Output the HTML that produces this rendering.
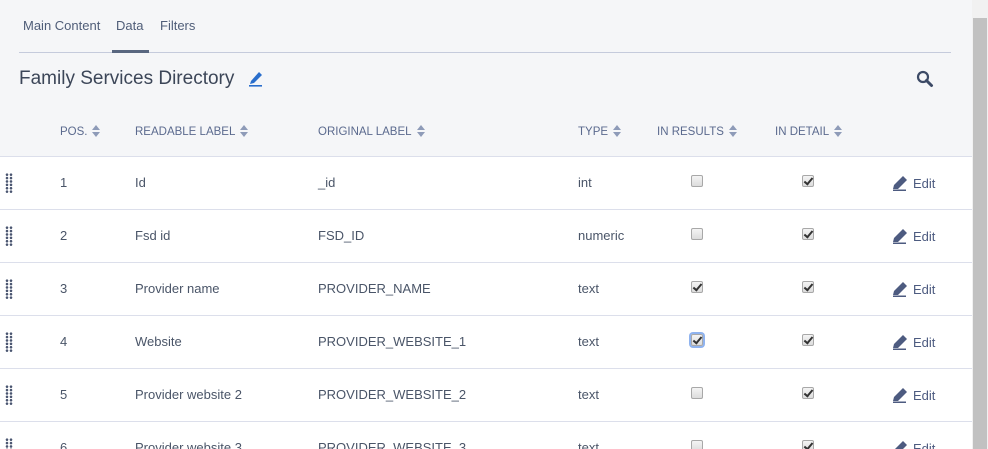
<!DOCTYPE html>
<html><head><meta charset="utf-8"><style>
*{box-sizing:border-box;margin:0;padding:0}
html,body{width:988px;height:449px;overflow:hidden}
body{background:#f5f6f8;font-family:"Liberation Sans",sans-serif;position:relative}
.tabs{position:absolute;left:19px;top:0;width:932px;height:53px;border-bottom:1px solid #c5cbdc}
.tab{position:absolute;top:18px;font-size:13px;color:#4f5d78}
.ul{position:absolute;left:112px;top:50px;width:37px;height:3px;background:#596780}
h1{position:absolute;left:19px;top:68px;font-size:19px;font-weight:normal;color:#3c4658}
.th{position:absolute;top:125px;font-size:11.5px;color:#5b6a8e;white-space:nowrap}
.sort{display:inline-block;width:8px;height:12px;vertical-align:-2px;margin-left:5px}
.rows{position:absolute;left:0;top:156px;width:972px;height:293px;overflow:hidden;background:#fff}
.row{position:relative;height:53px;border-top:1px solid #dcdfeb;font-size:13px;color:#4a5568}
.row span{position:absolute;top:18px}
.dots{position:absolute;left:5px;top:16px;width:8px;height:20px;background-image:radial-gradient(circle,#4a5570 1.2px,transparent 1.4px);background-size:4px 3.4px}
.cb{position:absolute;width:12px;height:12px;border:1px solid #a8a8a8;border-radius:2px;background:linear-gradient(#f4f4f4,#dcdcdc)}
.ck::after{content:"";position:absolute;left:3px;top:0px;width:3px;height:7px;border:solid #333;border-width:0 2px 2px 0;transform:rotate(40deg)}
.foc{box-shadow:0 0 0 2px #8fb3ef}
.edit{position:absolute;left:892px;top:17px;font-size:13px;color:#4d5b80}
.edit svg{vertical-align:-3px;margin-right:4px}
.sb{position:absolute;left:972px;top:0;width:16px;height:449px;background:#f1f1f1}
.sb div{position:absolute;left:1px;top:18px;width:14px;height:431px;background:#c1c1c1}
</style></head><body>
<div class="tabs"></div>
<div class="tab" style="left:23px">Main Content</div>
<div class="tab" style="left:116px">Data</div>
<div class="tab" style="left:160px">Filters</div>
<div class="ul"></div>
<h1>Family Services Directory</h1>
<svg style="position:absolute;left:248px;top:69px" width="16" height="18" viewBox="0 0 16 18"><path d="M3 12 L11 3 L14 6 L6 14 L2 15 Z" fill="#2a6ecc"/><rect x="1" y="16" width="13" height="1.6" fill="#2a6ecc"/></svg>
<svg style="position:absolute;left:916px;top:70px" width="18" height="18" viewBox="0 0 18 18"><circle cx="7" cy="7" r="5" fill="none" stroke="#3c4a66" stroke-width="2.2"/><path d="M10.5 10.5 L15.5 15.5" stroke="#3c4a66" stroke-width="3" stroke-linecap="round"/></svg>
<svg width="0" height="0" style="position:absolute"><defs><g id="s"><path d="M4 0 L8 5 H0 Z M0 7 H8 L4 12 Z" fill="#8e9bb8"/></g></defs></svg>
<div class="th" style="left:60px">POS.<svg class="sort" viewBox="0 0 8 12"><use href="#s"/></svg></div>
<div class="th" style="left:135px">READABLE LABEL<svg class="sort" viewBox="0 0 8 12"><use href="#s"/></svg></div>
<div class="th" style="left:318px">ORIGINAL LABEL<svg class="sort" viewBox="0 0 8 12"><use href="#s"/></svg></div>
<div class="th" style="left:578px">TYPE<svg class="sort" viewBox="0 0 8 12"><use href="#s"/></svg></div>
<div class="th" style="left:657px">IN RESULTS<svg class="sort" viewBox="0 0 8 12"><use href="#s"/></svg></div>
<div class="th" style="left:775px">IN DETAIL<svg class="sort" viewBox="0 0 8 12"><use href="#s"/></svg></div>
<div class="rows">
<div class="row"><div class="dots"></div><span style="left:60px">1</span><span style="left:135px">Id</span><span style="left:318px">_id</span><span style="left:578px">int</span><div class="cb" style="left:691px;top:18px"></div><div class="cb ck" style="left:802px;top:18px"></div><div class="edit"><svg width="17" height="17" viewBox="0 0 17 17"><path d="M2 11 L11 2 L15 6 L6 15 L1 15 Z" fill="#4d5b80"/><rect x="1" y="15.5" width="13" height="1.5" fill="#4d5b80"/></svg>Edit</div></div>
<div class="row"><div class="dots"></div><span style="left:60px">2</span><span style="left:135px">Fsd id</span><span style="left:318px">FSD_ID</span><span style="left:578px">numeric</span><div class="cb" style="left:691px;top:18px"></div><div class="cb ck" style="left:802px;top:18px"></div><div class="edit"><svg width="17" height="17" viewBox="0 0 17 17"><path d="M2 11 L11 2 L15 6 L6 15 L1 15 Z" fill="#4d5b80"/><rect x="1" y="15.5" width="13" height="1.5" fill="#4d5b80"/></svg>Edit</div></div>
<div class="row"><div class="dots"></div><span style="left:60px">3</span><span style="left:135px">Provider name</span><span style="left:318px">PROVIDER_NAME</span><span style="left:578px">text</span><div class="cb ck" style="left:691px;top:18px"></div><div class="cb ck" style="left:802px;top:18px"></div><div class="edit"><svg width="17" height="17" viewBox="0 0 17 17"><path d="M2 11 L11 2 L15 6 L6 15 L1 15 Z" fill="#4d5b80"/><rect x="1" y="15.5" width="13" height="1.5" fill="#4d5b80"/></svg>Edit</div></div>
<div class="row"><div class="dots"></div><span style="left:60px">4</span><span style="left:135px">Website</span><span style="left:318px">PROVIDER_WEBSITE_1</span><span style="left:578px">text</span><div class="cb ck foc" style="left:691px;top:18px"></div><div class="cb ck" style="left:802px;top:18px"></div><div class="edit"><svg width="17" height="17" viewBox="0 0 17 17"><path d="M2 11 L11 2 L15 6 L6 15 L1 15 Z" fill="#4d5b80"/><rect x="1" y="15.5" width="13" height="1.5" fill="#4d5b80"/></svg>Edit</div></div>
<div class="row"><div class="dots"></div><span style="left:60px">5</span><span style="left:135px">Provider website 2</span><span style="left:318px">PROVIDER_WEBSITE_2</span><span style="left:578px">text</span><div class="cb" style="left:691px;top:18px"></div><div class="cb ck" style="left:802px;top:18px"></div><div class="edit"><svg width="17" height="17" viewBox="0 0 17 17"><path d="M2 11 L11 2 L15 6 L6 15 L1 15 Z" fill="#4d5b80"/><rect x="1" y="15.5" width="13" height="1.5" fill="#4d5b80"/></svg>Edit</div></div>
<div class="row"><div class="dots"></div><span style="left:60px">6</span><span style="left:135px">Provider website 3</span><span style="left:318px">PROVIDER_WEBSITE_3</span><span style="left:578px">text</span><div class="cb" style="left:691px;top:18px"></div><div class="cb ck" style="left:802px;top:18px"></div><div class="edit"><svg width="17" height="17" viewBox="0 0 17 17"><path d="M2 11 L11 2 L15 6 L6 15 L1 15 Z" fill="#4d5b80"/><rect x="1" y="15.5" width="13" height="1.5" fill="#4d5b80"/></svg>Edit</div></div>
</div>
<div class="sb"><div></div></div>
</body></html>
